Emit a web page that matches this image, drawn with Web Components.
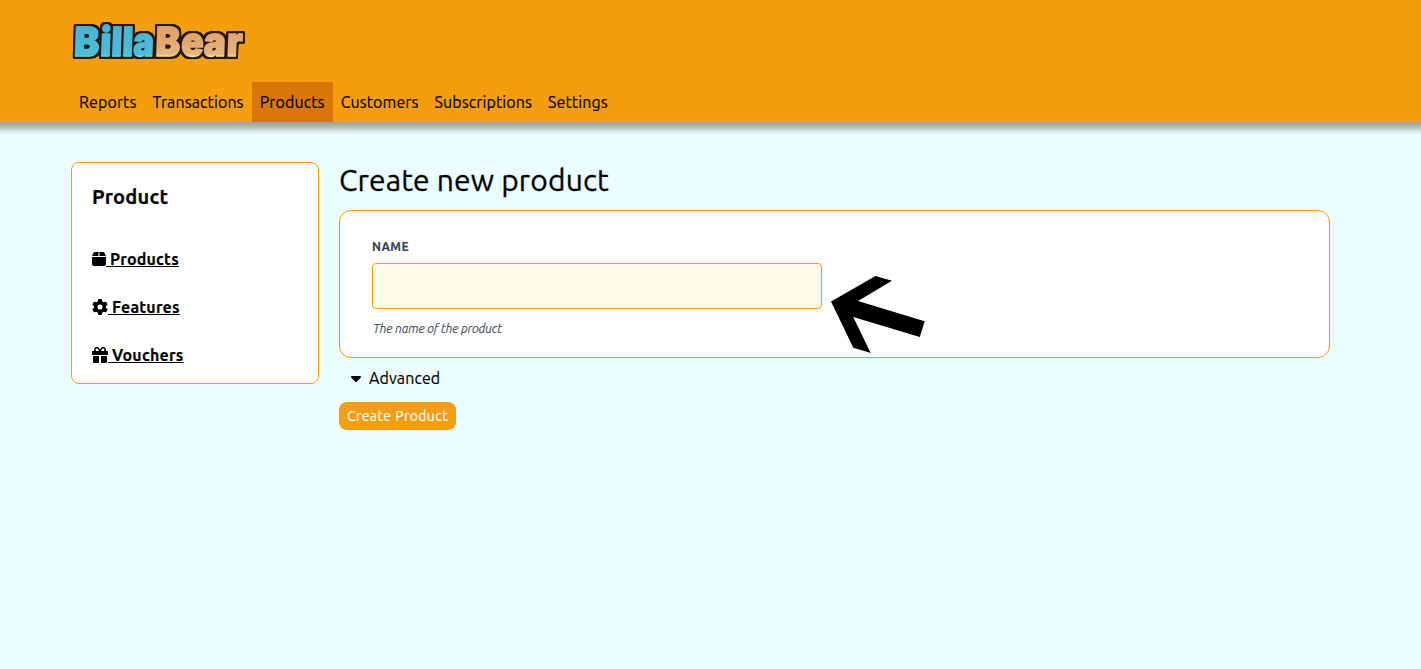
<!DOCTYPE html>
<html lang="en">
<head>
<meta charset="utf-8">
<title>BillaBear</title>
<style>
html,body{margin:0;height:100%}
body{background:#ecfeff;font-family:Ubuntu,"Noto Sans",sans-serif;font-size:16px;line-height:24px;letter-spacing:.1px;color:#000;overflow:hidden;-webkit-text-stroke-width:.15px}
</style>
</head>
<body>
<bb-app></bb-app>
<script>
const define = (name, html, ready) => customElements.define(name, class extends HTMLElement {
  connectedCallback() {
    if (this.shadowRoot) return;
    const t = document.createElement('template');
    t.innerHTML = html;
    this.attachShadow({mode: 'open'}).append(t.content.cloneNode(true));
    if (ready) ready(this, this.shadowRoot);
  }
});

const ICONS = {
  box: [448, 'M50.7 58.5L0 160H208V32H93.7C75.5 32 58.9 42.3 50.7 58.5zM240 160H448L397.3 58.5C389.1 42.3 372.5 32 354.3 32H240V160zM448 192H0V416c0 35.3 28.7 64 64 64H384c35.3 0 64-28.7 64-64V192z'],
  gear: [512, 'M495.9 166.6c3.2 8.7 .5 18.4-6.4 24.6l-43.3 39.4c1.1 8.3 1.7 16.8 1.7 25.4s-.6 17.1-1.7 25.4l43.3 39.4c6.9 6.2 9.6 15.9 6.4 24.6c-4.4 11.9-9.7 23.3-15.8 34.3l-4.7 8.1c-6.6 11-14 21.4-22.1 31.2c-5.9 7.2-15.7 9.6-24.5 6.8l-55.7-17.7c-13.4 10.3-28.2 18.9-44 25.4l-12.5 57.1c-2 9.1-9 16.3-18.2 17.8c-13.8 2.3-28 3.5-42.5 3.5s-28.7-1.2-42.5-3.5c-9.2-1.5-16.2-8.7-18.2-17.8l-12.5-57.1c-15.8-6.5-30.6-15.1-44-25.4L83.1 425.9c-8.8 2.8-18.6 .3-24.5-6.8c-8.1-9.8-15.5-20.2-22.1-31.2l-4.7-8.1c-6.1-11-11.4-22.4-15.8-34.3c-3.2-8.7-.5-18.4 6.4-24.6l43.3-39.4C64.6 273.1 64 264.6 64 256s.6-17.1 1.7-25.4L22.4 191.2c-6.9-6.2-9.6-15.9-6.4-24.6c4.4-11.9 9.7-23.3 15.8-34.3l4.7-8.1c6.6-11 14-21.4 22.1-31.2c5.9-7.2 15.7-9.6 24.5-6.8l55.7 17.7c13.4-10.3 28.2-18.9 44-25.4l12.5-57.1c2-9.1 9-16.3 18.2-17.8C227.3 1.2 241.5 0 256 0s28.7 1.2 42.5 3.5c9.2 1.5 16.2 8.7 18.2 17.8l12.5 57.1c15.8 6.5 30.6 15.1 44 25.4l55.7-17.7c8.8-2.8 18.6-.3 24.5 6.8c8.1 9.8 15.5 20.2 22.1 31.2l4.7 8.1c6.1 11 11.4 22.4 15.8 34.3zM256 336a80 80 0 1 0 0-160 80 80 0 1 0 0 160z'],
  gift: [512, 'M190.5 68.8L225.3 128H224 152c-22.1 0-40-17.9-40-40s17.9-40 40-40h2.2c14.9 0 28.8 7.9 36.3 20.8zM64 88c0 14.4 3.5 28 9.6 40H32c-17.7 0-32 14.3-32 32v64c0 17.7 14.3 32 32 32H480c17.7 0 32-14.3 32-32V160c0-17.7-14.3-32-32-32H438.4c6.1-12 9.6-25.6 9.6-40c0-48.6-39.4-88-88-88h-2.2c-31.9 0-61.5 16.9-77.7 44.4L256 85.5l-24.1-41C215.7 16.9 186.1 0 154.2 0H152C103.4 0 64 39.4 64 88zm336 0c0 22.1-17.9 40-40 40H288h-1.3l34.8-59.2C329.1 55.9 342.9 48 357.8 48H360c22.1 0 40 17.9 40 40zM32 288V464c0 26.5 21.5 48 48 48H224V288H32zM288 512H432c26.5 0 48-21.5 48-48V288H288V512z'],
  caret: [320, 'M137.4 374.6c12.5 12.5 32.8 12.5 45.3 0l128-128c9.2-9.2 11.9-22.9 6.9-34.9s-16.6-19.8-29.6-19.8L32 192c-12.9 0-24.6 7.8-29.6 19.8s-2.2 25.7 6.9 34.9l128 128z']
};
define('bb-icon', `<style>:host{display:block;height:16px}svg{display:block;height:16px}</style><svg><path fill="currentColor"/></svg>`,
(el, root) => {
  const [w, d] = ICONS[el.getAttribute('name')];
  root.querySelector('svg').setAttribute('viewBox', `0 0 ${w} 512`);
  root.querySelector('svg').style.width = w / 32 + 'px';
  root.querySelector('path').setAttribute('d', d);
});

define('bb-logo', `<style>:host{display:block;width:178px;height:62px;letter-spacing:0}svg{display:block;overflow:visible}
text{font:900 40px Inter,"Open Sans",sans-serif;stroke-width:1.7;stroke-linejoin:round}</style>
<svg width="178" height="62" viewBox="70 10 178 62">
<defs>
<linearGradient id="b" x1="0" y1="-30" x2="0" y2="1" gradientUnits="userSpaceOnUse"><stop offset="0" stop-color="#4bb2d2"/><stop offset=".92" stop-color="#4dbdda"/><stop offset="1" stop-color="#7be0e6"/></linearGradient>
<linearGradient id="t" x1="0" y1="-30" x2="0" y2="1" gradientUnits="userSpaceOnUse"><stop offset="0" stop-color="#e1a066"/><stop offset=".5" stop-color="#e2a970"/><stop offset=".9" stop-color="#e6b67b"/><stop offset="1" stop-color="#fae2af"/></linearGradient>
<filter id="edge" x="60" y="8" width="200" height="66" filterUnits="userSpaceOnUse" color-interpolation-filters="sRGB">
<feMorphology in="SourceAlpha" operator="dilate" radius="2"/><feGaussianBlur stdDeviation=".6"/>
<feComponentTransfer result="a"><feFuncA type="linear" slope="1.6" intercept="-.3"/></feComponentTransfer>
<feFlood flood-color="#231815"/><feComposite in2="a" operator="in"/>
<feMerge><feMergeNode/><feMergeNode in="SourceGraphic"/></feMerge></filter>
</defs>
<g id="art" filter="url(#edge)"></g>
</svg>`, (el, root) => {
  const NS = 'http://www.w3.org/2000/svg', art = root.querySelector('#art');
  /* glyph, left edge, ink width */
  const letters = [['B',75.6,22.4],['i',101.6,7.8],['l',112.6,7.8],['l',123.5,7.8],['a',134,18],['B',157,21.8],['e',182,20],['a',204.7,19.2],['r',227.8,14]];
  letters.forEach(([ch, x, w], i) => {
    const t = document.createElementNS(NS, 'text');
    t.textContent = ch;
    art.append(t);
    const adv = t.getComputedTextLength();
    const [l, r] = {B: [.07, .04], i: [.14, .14], l: [.14, .14], a: [.05, .07], e: [.05, .05], r: [.09, .01]}[ch];
    const sx = w / (adv * (1 - l - r));
    t.setAttribute('transform', `translate(${x - adv * l * sx} 56) skewX(-2) scale(${sx} 1)`);
    t.style.fill = t.style.stroke = i < 5 ? 'url(#b)' : 'url(#t)';
  });
});

define('bb-nav-item', `<style>:host{display:block;padding:8px;height:24px}:host([active]){background:#d97706}</style><slot></slot>`);

define('bb-header', `<style>
:host{display:flex;flex-direction:column;justify-content:space-between;box-sizing:border-box;height:122px;padding:10px 0 0 70px;background:#f59e0b;box-shadow:0 0 7px 7px rgba(0,0,0,.36)}
nav{display:flex;margin-left:1px}</style>
<bb-logo></bb-logo>
<nav>
<bb-nav-item>Reports</bb-nav-item>
<bb-nav-item>Transactions</bb-nav-item>
<bb-nav-item active>Products</bb-nav-item>
<bb-nav-item>Customers</bb-nav-item>
<bb-nav-item>Subscriptions</bb-nav-item>
<bb-nav-item>Settings</bb-nav-item>
</nav>`);

define('bb-side-link', `<style>:host{display:flex;align-items:center;height:24px;font-weight:700;letter-spacing:.18px}
span{white-space:pre;text-decoration:underline}</style><slot name="icon"></slot><span> <slot></slot></span>`);

define('bb-sidebar', `<style>
:host{display:flex;flex-direction:column;box-sizing:border-box;width:248px;height:222px;border:1px solid #f59e0b;border-radius:8px;background:#fff;padding:20px}
h2{margin:0 0 36px;font-size:20px;line-height:28px;font-weight:700;letter-spacing:.2px;height:28px}
nav{display:flex;flex-direction:column;gap:24px}</style>
<h2>Product</h2>
<nav>
<bb-side-link><bb-icon slot="icon" name="box"></bb-icon>Products</bb-side-link>
<bb-side-link><bb-icon slot="icon" name="gear"></bb-icon>Features</bb-side-link>
<bb-side-link><bb-icon slot="icon" name="gift"></bb-icon>Vouchers</bb-side-link>
</nav>`);

define('bb-arrow', `<style>:host{position:absolute;left:491px;top:65px;width:94px;height:78px}svg{display:block}</style>
<svg width="94" height="78" viewBox="831 276 94 78"><path d="M831 301.5L875.5 276L892 280.8L858 301L924.7 321.2L919.8 337L853.2 317L870.7 353L853.3 347.8Z"/></svg>`);

define('bb-form-card', `<style>
:host{display:flex;flex-direction:column;position:relative;box-sizing:border-box;height:148px;border:1px solid #f59e0b;border-radius:12px;background:#fff;padding:28px 32px 0}
label{font-size:12px;line-height:16px;font-weight:700;letter-spacing:.45px;color:#374151;height:16px}
input{box-sizing:border-box;width:450px;height:46px;margin:8px 0 11px;border:1px solid #f59e0b;border-radius:4px;background:#fffbeb;padding:0 16px;outline:0}
p{margin:0;padding-left:1px;font-size:12.4px;line-height:17px;letter-spacing:-.18px;font-style:italic;color:#4b5563}</style>
<label for="name">NAME</label>
<input id="name" type="text">
<p>The name of the product</p>
<bb-arrow></bb-arrow>`);

define('bb-main', `<style>
:host{display:flex;flex-direction:column;align-items:flex-start;width:991px}
h1{margin:0 0 12px;font-size:30px;font-weight:400;line-height:36px;height:36px;letter-spacing:.13px;-webkit-text-stroke-width:.3px}
bb-form-card{width:100%}
.advanced{display:flex;align-items:center;gap:8px;height:24px;margin:8px 0 12px 12px}
button{font:inherit;font-size:14px;line-height:20px;letter-spacing:.42px;display:block;height:28px;border:0;border-radius:8px;padding:4px 8px;background:#f59e0b;color:#fff}</style>
<h1>Create new product</h1>
<bb-form-card></bb-form-card>
<div class="advanced"><bb-icon name="caret"></bb-icon>Advanced</div>
<button type="button">Create Product</button>`);

define('bb-app', `<style>:host{display:block;height:100%}
main{display:flex;align-items:flex-start;gap:20px;padding:40px 0 0 71px}</style>
<bb-header></bb-header><main><bb-sidebar></bb-sidebar><bb-main></bb-main></main>`);
</script>
</body>
</html>
